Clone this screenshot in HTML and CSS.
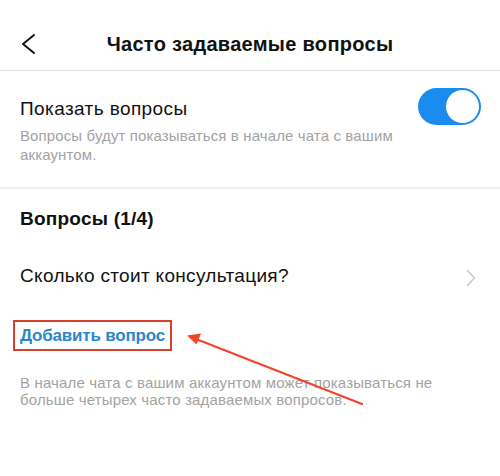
FILE: index.html
```html
<!DOCTYPE html>
<html lang="ru">
<head>
<meta charset="utf-8">
<link rel="stylesheet" href="styles.css">
</head>
<body>
<div class="screen">
  <header class="nav">
    <svg class="back" width="16" height="22" viewBox="0 0 16 22"><path d="M14 2 L3 11 L14 20" fill="none" stroke="#111" stroke-width="2" stroke-linecap="round" stroke-linejoin="round"/></svg>
    <h1 class="nav-title">Часто задаваемые вопросы</h1>
    <span class="nav-spacer"></span>
  </header>

  <section class="setting">
    <div class="setting-row">
      <div class="setting-title">Показать вопросы</div>
      <div class="toggle"><div class="knob"></div></div>
    </div>
    <p class="setting-desc">Вопросы будут показываться в начале чата с вашим<br>аккаунтом.</p>
  </section>

  <section class="questions">
    <h2 class="q-head">Вопросы (1/4)</h2>
    <div class="q-row">
      <span class="q-text">Сколько стоит консультация?</span>
      <svg class="chev" width="10" height="18" viewBox="0 0 10 18"><path d="M1.5 1.5 L8.5 9 L1.5 16.5" fill="none" stroke="#c7c7cc" stroke-width="1.5" stroke-linecap="round" stroke-linejoin="round"/></svg>
    </div>
    <div class="add-wrap"><span class="add-link">Добавить вопрос</span></div>
    <p class="note">В начале чата с вашим аккаунтом может показываться не<br>больше четырех часто задаваемых вопросов.</p>
  </section>

  <svg class="arrow" width="500" height="476" viewBox="0 0 500 476">
    <line x1="362" y1="404" x2="196" y2="339" stroke="#f0442b" stroke-width="2.2" stroke-linecap="round"/>
    <path d="M187 335.5 L201 333.5 L196.5 344.5 Z" fill="#f0442b"/>
  </svg>
</div>
</body>
</html>
```
FILE: styles.css
```css
* { box-sizing: border-box; }
html, body { margin: 0; padding: 0; background: #fff; }
body { font-family: "Liberation Sans", Arial, sans-serif; color: #111; }
.screen { position: relative; width: 500px; height: 476px; overflow: hidden; }

.nav {
  height: 71px;
  border-bottom: 1px solid #e3e3e3;
  padding: 18px 20px 0 20px;
  display: grid;
  grid-template-columns: 40px 1fr 40px;
  align-items: center;
}
.back { display: block; }
.nav-title { margin: 0; text-align: center; font-size: 20px; line-height: 23px; font-weight: bold; letter-spacing: 0.3px; }

.setting { padding: 17px 19px 23px 20px; border-bottom: 2px solid #efefef; }
.setting-row { display: flex; align-items: center; justify-content: space-between; height: 37px; }
.setting-title { font-size: 19px; line-height: 24px; margin-top: 4px; letter-spacing: 0.4px; }
.toggle { width: 63px; height: 37px; border-radius: 19px; background: #1a8cf0; position: relative; }
.knob { position: absolute; right: 2px; top: 2px; width: 33px; height: 33px; border-radius: 50%; background: #fff; }
.setting-desc { margin: 1px 0 0 0; font-size: 15px; line-height: 19px; color: #a3a3a3; letter-spacing: 0.12px; }

.questions { padding: 18px 24px 0 20px; }
.q-head { margin: 0; font-size: 19px; line-height: 24px; font-weight: bold; letter-spacing: 0.23px; }
.q-row { display: flex; align-items: center; justify-content: space-between; height: 46px; margin-top: 22px; }
.q-text { font-size: 19px; line-height: 24px; letter-spacing: 0.33px; }
.chev { margin-top: 3px; }
.add-wrap { margin: 21px 0 0 -7px; }
.add-link {
  display: inline-block;
  border: 2px solid #d6412e;
  padding: 3px 5px 2px 5px;
  font-size: 17px;
  line-height: 22px;
  font-weight: bold;
  letter-spacing: -0.2px;
  color: #2a87c9;
}
.note { margin: 23px 0 0 0; font-size: 15px; line-height: 17px; color: #a3a3a3; letter-spacing: 0.15px; }

.arrow { position: absolute; left: 0; top: 0; pointer-events: none; }
```
